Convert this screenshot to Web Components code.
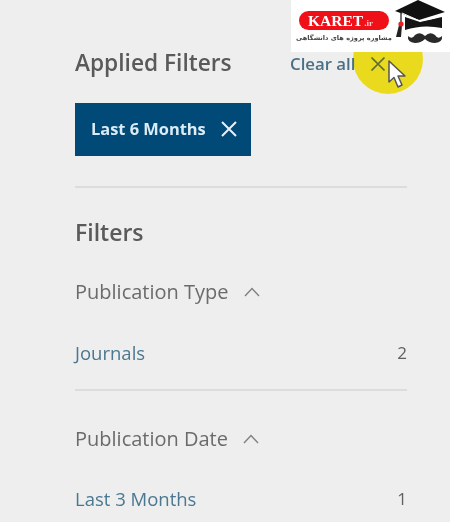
<!DOCTYPE html>
<html>
<head>
<meta charset="utf-8">
<style>
  html, body { margin: 0; height: 522px; overflow: hidden; background: #eeeeee; }
  body { font-family: "Open Sans", "Liberation Sans", sans-serif; }
</style>
</head>
<body>
<filter-panel>
  <filter-head>Applied Filters</filter-head>
  <filter-chip>Last 6 Months</filter-chip>
  <filter-rule style="--top:30px"></filter-rule>
  <filter-head style="--top:28px" size="23px">Filters</filter-head>
  <filter-group style="--top:31px" label="Publication Type">
    <filter-row count="2">Journals</filter-row>
  </filter-group>
  <filter-rule style="--top:25px"></filter-rule>
  <filter-group style="--top:35px" label="Publication Date">
    <filter-row count="1">Last 3 Months</filter-row>
  </filter-group>
</filter-panel>
<karet-logo></karet-logo>
<script>
customElements.define(
  "filter-panel",
  class extends HTMLElement {
    constructor() {
      super()
      this.attachShadow({ mode: 'open' }).innerHTML = `
      <style>
        :host {
          display: block;
          position: relative;
          height: 522px;
          box-sizing: border-box;
          padding: 47px 43px 0 75px;
          overflow: hidden;
          filter: blur(0.5px);
        }
        #clear {
          position: absolute;
          left: 290px;
          top: 53px;
          display: flex;
          align-items: center;
          gap: 15px;
          font-size: 16.8px;
          font-weight: 600;
          line-height: 21px;
          color: #4a7087;
        }
        #spot {
          position: absolute;
          left: 353px;
          top: 24px;
          width: 70px;
          height: 70px;
          border-radius: 50%;
          background: #e9da1e;
        }
        svg { display: block; }
        #cursor { position: absolute; left: 387px; top: 59px; }
      </style>
      <div id="spot"></div>
      <slot></slot>
      <div id="clear">
        <span>Clear all</span>
        <svg width="16" height="16" viewBox="0 0 16 16"><path d="M1.5 1.5 14.5 14.5M14.5 1.5 1.5 14.5" stroke="#5b6a3a" stroke-width="1.7" fill="none"/></svg>
      </div>
      <svg id="cursor" width="20" height="31" viewBox="0 0 20 31"><path d="M2 2 2 23 7 18.5 11 28 15 26 11 17 18 17Z" fill="#fff" stroke="#555" stroke-width="1.5" stroke-linejoin="round"/></svg>
      `;
    }
  }
);

customElements.define(
  "filter-head",
  class extends HTMLElement {
    constructor() {
      super()
      this.attachShadow({ mode: 'open' }).innerHTML = `
      <style>
        :host {
          display: block;
          margin-top: var(--top, 0);
          font-size: ${this.getAttribute('size') || '22.7px'};
          font-weight: 600;
          line-height: 32px;
          color: #5a5a5a;
        }
      </style>
      <slot></slot>
      `;
    }
  }
);

customElements.define(
  "filter-chip",
  class extends HTMLElement {
    constructor() {
      super()
      this.attachShadow({ mode: 'open' }).innerHTML = `
      <style>
        :host {
          display: flex;
          align-items: center;
          justify-content: space-between;
          box-sizing: border-box;
          width: 176px;
          height: 53px;
          margin-top: 24px;
          padding: 0 14px 2px 16px;
          background: #014a78;
          color: #dcecf5;
          font-size: 16.4px;
          font-weight: 700;
        }
        svg { display: block; }
      </style>
      <slot></slot>
      <svg width="16" height="16" viewBox="0 0 16 16"><path d="M1 1 15 15M15 1 1 15" stroke="#e8f1f6" stroke-width="2" fill="none"/></svg>
      `;
    }
  }
);

customElements.define(
  "filter-rule",
  class extends HTMLElement {
    constructor() {
      super()
      this.attachShadow({ mode: 'open' }).innerHTML = `
      <style>
        :host {
          display: block;
          height: 2px;
          margin-top: var(--top, 0);
          background: #dcdcdc;
        }
      </style>
      `;
    }
  }
);

customElements.define(
  "filter-group",
  class extends HTMLElement {
    constructor() {
      super()
      this.attachShadow({ mode: 'open' }).innerHTML = `
      <style>
        :host {
          display: block;
          margin-top: var(--top, 0);
        }
        #label {
          display: flex;
          align-items: center;
          gap: 15px;
          font-size: 20px;
          line-height: 26px;
          color: #6b6b6b;
        }
        svg { display: block; }
      </style>
      <div id="label">
        <span></span>
        <svg width="16" height="10" viewBox="0 0 16 10"><path d="M1 9 8 1.5 15 9" stroke="#808080" stroke-width="1.4" fill="none"/></svg>
      </div>
      <slot></slot>
      `;
      this.shadowRoot.querySelector('span').textContent = this.getAttribute('label')
    }
  }
);

customElements.define(
  "filter-row",
  class extends HTMLElement {
    constructor() {
      super()
      this.attachShadow({ mode: 'open' }).innerHTML = `
      <style>
        :host {
          display: flex;
          justify-content: space-between;
          margin-top: 36.5px;
          font-size: 18.5px;
          line-height: 22px;
          color: #4a7890;
        }
        #count { color: #606060; font-size: 17px; }
      </style>
      <slot></slot>
      <span id="count"></span>
      `;
      this.shadowRoot.querySelector('#count').textContent = this.getAttribute('count')
    }
  }
);

customElements.define(
  "karet-logo",
  class extends HTMLElement {
    constructor() {
      super()
      this.attachShadow({ mode: 'open' }).innerHTML = `
      <style>
        :host {
          position: absolute;
          left: 291px;
          top: 0;
          width: 159px;
          height: 52px;
          background: #ffffff;
          display: flex;
          filter: blur(0.5px);
        }
        #mark {
          display: flex;
          flex-direction: column;
          align-items: center;
          width: 104px;
          padding: 11px 5px 0 7px;
          box-sizing: border-box;
        }
        #pill {
          display: flex;
          align-items: baseline;
          box-sizing: border-box;
          gap: 1px;
          width: 90px;
          height: 19px;
          padding-left: 9px;
          border-radius: 10px;
          background: #f01018;
          color: #fff;
          font-family: "Liberation Serif", serif;
          font-weight: 700;
          font-size: 15.5px;
          line-height: 19px;
        }
        #pill small { font-size: 9px; color: #ffc4c4; }
        #sub {
          margin-top: 4px;
          font-family: "DejaVu Sans", sans-serif;
          font-size: 6.6px;
          font-weight: 700;
          line-height: 8px;
          color: #444;
          white-space: nowrap;
        }
        svg { display: block; }
      </style>
      <div id="mark">
        <div id="pill"><span>KARET</span><small>.ir</small></div>
        <div id="sub" dir="rtl">مشاوره پروژه های دانشگاهی</div>
      </div>
      <svg width="55" height="46" viewBox="0 0 55 46">
        <path d="M10 17 25 22 47 17V28Q28 24 10 30Z" fill="#151515"/>
        <path d="M23 0 50 12 24 20 0 11Z" fill="#111"/>
        <path d="M7 13 25 21 40 18" stroke="#fff" stroke-width="1" fill="none"/>
        <path d="M6 12V24" stroke="#222" stroke-width="1.3" fill="none"/>
        <path d="M4 25 1 37H6L7 25Z" fill="#222"/>
        <circle cx="6" cy="24" r="2.6" fill="#ea1c24"/>
        <path d="M30 36Q25 31 20 35 17 40 13 36 12 42 20 43 26 43 30 39 34 43 40 43 48 42 47 36 43 40 40 35 35 31 30 36Z" fill="#2a2a2a"/>
      </svg>
      `;
    }
  }
);
</script>
</body>
</html>
